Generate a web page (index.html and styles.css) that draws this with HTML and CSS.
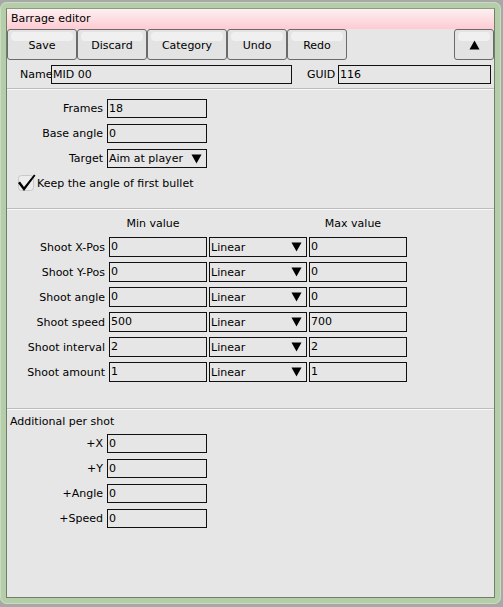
FILE: index.html
```html
<!DOCTYPE html>
<html>
<head>
<meta charset="utf-8">
<link rel="stylesheet" href="styles.css">
</head>
<body>
<div class="window">
  <div class="inner">
    <div class="titlebar">Barrage editor</div>
    <div class="toolbar">
      <div class="btn w70">Save</div>
      <div class="btn w70">Discard</div>
      <div class="btn w80">Category</div>
      <div class="btn w60">Undo</div>
      <div class="btn w60">Redo</div>
      <div class="spacer"></div>
      <div class="btn w40 arrow"><svg width="11" height="10" viewBox="0 0 11 10"><path d="M5.5 0.5 L10.5 9.5 L0.5 9.5 Z" fill="#000"/></svg></div>
    </div>
    <div class="namerow">
      <span class="lbl name-lbl">Name</span><div class="field name-f">MID 00</div>
      <span class="lbl guid-lbl">GUID</span><div class="field guid-f">116</div>
    </div>

    <div class="section s1">
      <div class="grid1">
        <span class="rlbl">Frames</span><div class="field f100">18</div>
        <span class="rlbl">Base angle</span><div class="field f100">0</div>
        <span class="rlbl">Target</span><div class="field f100 sel"><span>Aim at player</span><svg class="tri" width="11" height="10" viewBox="0 0 11 10"><path d="M0.5 0.5 L10.5 0.5 L5.5 9.5 Z" fill="#000"/></svg></div>
      </div>
      <div class="check">
        <svg class="cbox" width="20" height="20" viewBox="0 0 20 20"><rect x="1.5" y="2.5" width="15" height="15" rx="3" fill="#ececec" stroke="#c8c8c8"/><path d="M1 10 L3 8.5 L7 14 L17 1.5 L18.5 2.5 L7 18 Z" fill="#000"/></svg>
        <span>Keep the angle of first bullet</span>
      </div>
    </div>

    <div class="section s2">
      <div class="grid2">
        <span></span><span class="hdr">Min value</span><span></span><span class="hdr">Max value</span>
        <span class="rlbl">Shoot X-Pos</span><div class="field">0</div><div class="field sel"><span>Linear</span><svg class="tri" width="11" height="10" viewBox="0 0 11 10"><path d="M0.5 0.5 L10.5 0.5 L5.5 9.5 Z" fill="#000"/></svg></div><div class="field">0</div>
        <span class="rlbl">Shoot Y-Pos</span><div class="field">0</div><div class="field sel"><span>Linear</span><svg class="tri" width="11" height="10" viewBox="0 0 11 10"><path d="M0.5 0.5 L10.5 0.5 L5.5 9.5 Z" fill="#000"/></svg></div><div class="field">0</div>
        <span class="rlbl">Shoot angle</span><div class="field">0</div><div class="field sel"><span>Linear</span><svg class="tri" width="11" height="10" viewBox="0 0 11 10"><path d="M0.5 0.5 L10.5 0.5 L5.5 9.5 Z" fill="#000"/></svg></div><div class="field">0</div>
        <span class="rlbl">Shoot speed</span><div class="field">500</div><div class="field sel"><span>Linear</span><svg class="tri" width="11" height="10" viewBox="0 0 11 10"><path d="M0.5 0.5 L10.5 0.5 L5.5 9.5 Z" fill="#000"/></svg></div><div class="field">700</div>
        <span class="rlbl">Shoot interval</span><div class="field">2</div><div class="field sel"><span>Linear</span><svg class="tri" width="11" height="10" viewBox="0 0 11 10"><path d="M0.5 0.5 L10.5 0.5 L5.5 9.5 Z" fill="#000"/></svg></div><div class="field">2</div>
        <span class="rlbl">Shoot amount</span><div class="field">1</div><div class="field sel"><span>Linear</span><svg class="tri" width="11" height="10" viewBox="0 0 11 10"><path d="M0.5 0.5 L10.5 0.5 L5.5 9.5 Z" fill="#000"/></svg></div><div class="field">1</div>
      </div>
    </div>

    <div class="section s3">
      <div class="sec-title">Additional per shot</div>
      <div class="grid1">
        <span class="rlbl">+X</span><div class="field f100">0</div>
        <span class="rlbl">+Y</span><div class="field f100">0</div>
        <span class="rlbl">+Angle</span><div class="field f100">0</div>
        <span class="rlbl">+Speed</span><div class="field f100">0</div>
      </div>
    </div>
  </div>
</div>
</body>
</html>
```
FILE: styles.css
```css
html, body {
  margin: 0;
  padding: 0;
  background: #a8a8a8;
  width: 503px;
  height: 607px;
  overflow: hidden;
}
body {
  font-family: "DejaVu Sans", sans-serif;
  font-size: 11px;
  color: #000;
}
.window {
  margin-top: 2px;
  width: 501px;
  height: 602px;
  box-sizing: border-box;
  background: #b6cdaa;
  border-radius: 7px;
  padding: 6px;
  box-shadow: inset 0 0 0 1px #c8dcbf;
}
.inner {
  box-sizing: border-box;
  height: 100%;
  border: 1px solid #6f7f68;
  border-top-color: #8c9a86;
  background: #e6e6e6;
  display: flex;
  flex-direction: column;
}
.titlebar {
  height: 20px;
  line-height: 19px;
  padding-left: 4px;
  background: linear-gradient(#fbf0f1, #ffcbd3);
  font-size: 11px;
}
.toolbar {
  display: flex;
  height: 31px;
}
.btn {
  box-sizing: border-box;
  height: 31px;
  border: 1px solid #6a6a6a;
  border-radius: 3px;
  background: #e3e3e3;
  display: flex;
  align-items: center;
  justify-content: center;
  position: relative;
  padding-top: 1px;
}
.btn::before {
  content: "";
  position: absolute;
  left: 3px;
  right: 3px;
  top: 2px;
  height: 9px;
  border-radius: 4px;
  background: #f0f0f0;
}
.btn svg { position: relative; }
.w70 { width: 70px; }
.w80 { width: 80px; }
.w60 { width: 60px; }
.w40 { width: 40px; }
.spacer { flex: 1; }
.namerow {
  display: flex;
  align-items: center;
  height: 28px;
  border-bottom: 1px solid #bdbdbd;
  box-shadow: 0 1px 0 #f8f8f8;
}
.lbl { white-space: nowrap; }
.name-lbl { margin-left: 13px; width: 31px; }
.guid-lbl { margin-left: 15px; width: 31px; }
.field {
  box-sizing: border-box;
  height: 20px;
  border: 1px solid #111;
  padding-left: 1px;
  line-height: 17px;
  white-space: nowrap;
  overflow: hidden;
}
.name-f { width: 241px; height: 19px; }
.guid-f { width: 153px; height: 19px; }
.section {
  border-bottom: 1px solid #bdbdbd;
  box-shadow: 0 1px 0 #f8f8f8;
  margin-bottom: 1px;
}
.s1 { height: 120px; padding-top: 10px; box-sizing: border-box; }
.grid1 {
  display: grid;
  grid-template-columns: 98px 100px;
  column-gap: 2px;
  row-gap: 6px;
  align-items: center;
}
.grid1 .field { height: 19px; }
.rlbl { text-align: right; white-space: nowrap; padding-right: 2px; }
.sel {
  display: flex;
  align-items: center;
  justify-content: space-between;
  padding-right: 4px;
}
.sel .tri { flex: none; }
.check {
  display: flex;
  align-items: center;
  margin-top: 5px;
  margin-left: 10px;
  height: 20px;
}
.s2 {
  height: 199px;
  box-sizing: border-box;
  padding-top: 7px;
}
.grid2 {
  display: grid;
  grid-template-columns: 100px 98px 98px 98px;
  column-gap: 2px;
  row-gap: 5px;
  align-items: center;
}
.hdr {
  text-align: center;
  padding-right: 10px;
  margin-bottom: 2px;
}
.s3 {
  border-bottom: none;
  box-shadow: none;
  flex: 1;
  padding-top: 5px;
}
.sec-title {
  margin-left: 3px;
  height: 19px;
}
.s3 .grid1 { row-gap: 6px; }
```
